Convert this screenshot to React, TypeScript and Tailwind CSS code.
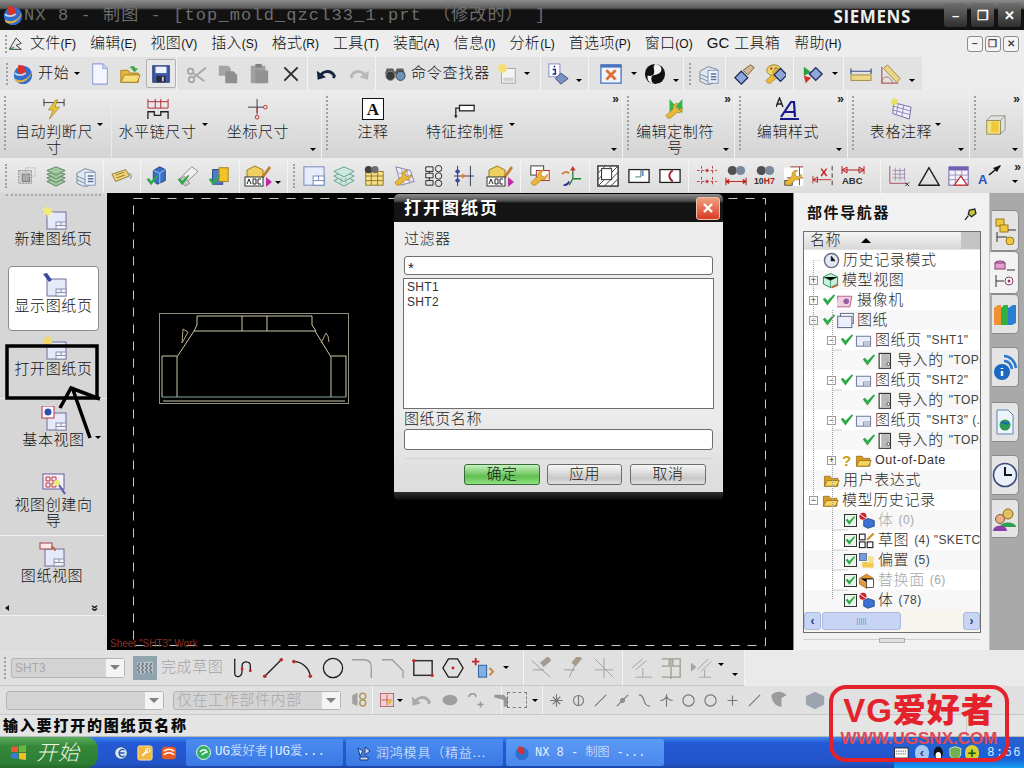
import type { ReactNode } from 'react';

const cjk = "font-['Liberation_Sans','Noto_Sans_CJK_SC',sans-serif]";

function Ic({ s = 22, w, children, className = '' }: { s?: number; w?: number; children: ReactNode; className?: string }) {
  return (
    <svg width={w ?? s} height={s} viewBox={`0 0 ${w ? (24 * w) / s : 24} 24`} fill="none" className={`shrink-0 ${className}`}>
      {children}
    </svg>
  );
}

function Dd({ className = '' }: { className?: string }) {
  return <span className={`inline-block shrink-0 w-0 h-0 border-x-[3px] border-t-[3px] border-x-transparent border-t-black ${className}`} />;
}

function Grip({ className = '' }: { className?: string }) {
  return <span className={`block shrink-0 w-0 border-l-2 border-dotted border-[#a0a0a0] ${className}`} />;
}

/* toolbar icons */
const Globe = () => (
  <Ic>
    <circle cx="12" cy="13" r="10" fill="#2f6fd0" />
    <path d="M3 17c6 4 14 2 19-8-2 9-11 15-18 11z" fill="#e8b23c" />
    <path d="M7 2l6 1 3 8-5 4-5-6z" fill="#d8322c" />
    <path d="M3 11c3 3 8 3 12 0" stroke="#bcd8f5" strokeWidth="2" />
  </Ic>
);
const DocNew = () => (
  <Ic>
    <path d="M4 1h11l5 5v17H4z" fill="#f4f6ff" stroke="#8ea0d8" strokeWidth="1.2" />
    <path d="M15 1v5h5" fill="#cfd8f4" stroke="#8ea0d8" />
  </Ic>
);
const FolderOpen = () => (
  <Ic>
    <path d="M2 8h8l2 3h9v10H2z" fill="#e4b73c" stroke="#a37d1c" />
    <path d="M2 21l4-8h17l-3 8z" fill="#f7dc78" stroke="#a37d1c" />
    <path d="M11 6c3-4 6-3 7 0h3l-4 4-4-4h2c-1-1-3-1-4 0z" fill="#3fa44a" />
  </Ic>
);
const Floppy = () => (
  <Ic>
    <rect x="3" y="3" width="18" height="18" fill="#3b5aa8" stroke="#26386c" />
    <rect x="6" y="4" width="12" height="7" fill="#f0f2fa" />
    <rect x="7" y="14" width="10" height="7" fill="#2a2a3c" />
    <rect x="13" y="15" width="2" height="5" fill="#c8c8d8" />
  </Ic>
);
const Scissors = () => (
  <Ic>
    <circle cx="6" cy="18" r="3" stroke="#a8a8a8" strokeWidth="2" />
    <circle cx="5" cy="9" r="3" stroke="#a8a8a8" strokeWidth="2" />
    <path d="M8 16L22 5M8 11l12 9" stroke="#a8a8a8" strokeWidth="2" />
  </Ic>
);
const Copy = () => (
  <Ic>
    <path d="M2 3h10l3 3v8H2z" fill="#a4a4a4" />
    <path d="M9 9h9l4 4v9H9z" fill="#8e8e8e" />
  </Ic>
);
const Paste = () => (
  <Ic>
    <rect x="3" y="3" width="16" height="19" rx="1" fill="#a0a0a0" />
    <rect x="8" y="1" width="7" height="4" fill="#808080" />
    <rect x="8" y="8" width="14" height="14" fill="#929292" />
  </Ic>
);
const Times = () => (
  <Ic s={20}>
    <path d="M4 4l16 16M20 4L4 20" stroke="#303030" strokeWidth="2.4" />
  </Ic>
);
const Undo = ({ c = '#15233f' }: { c?: string }) => (
  <Ic w={22} s={20}>
    <path d="M5 17c1-9 12-11 17-3l-1 3" stroke={c} strokeWidth="3.4" />
    <path d="M1 8l1 11 10-3z" fill={c} />
  </Ic>
);
const Redo = () => (
  <Ic w={22} s={20}>
    <path d="M21 17c-1-9-12-11-17-3l1 3" stroke="#b8b8b8" strokeWidth="3.4" />
    <path d="M25 8l-1 11-10-3z" fill="#b8b8b8" />
  </Ic>
);
const Binoc = () => (
  <Ic>
    <path d="M3 6h7l2 4 2-4h7l2 6H1z" fill="#5d5d5d" />
    <circle cx="7" cy="14" r="5" fill="#3a3a3a" stroke="#8a8a8a" />
    <circle cx="18" cy="14" r="5" fill="#6f92b8" stroke="#3a3a3a" />
  </Ic>
);
const DocGlow = () => (
  <Ic>
    <path d="M6 6h15v16H6z" fill="#f4f4f4" stroke="#a0a0a0" />
    <rect x="8" y="16" width="11" height="4" fill="#cfcfcf" />
    <circle cx="7" cy="6" r="5" fill="#f3de7c" />
  </Ic>
);
const Info = () => (
  <Ic>
    <rect x="1" y="1" width="12" height="14" fill="#fff" stroke="#7a8ac0" />
    <path d="M7 3v2M5 7h3v5M5 12h4" stroke="#1a2a8a" strokeWidth="1.6" />
    <path d="M14 11l8 6-8 6-6-6z" fill="#7b93c8" stroke="#3d4a78" />
  </Ic>
);
const Fit = () => (
  <Ic>
    <rect x="1" y="2" width="22" height="20" fill="#eef4ff" stroke="#4672c0" strokeWidth="1.4" />
    <rect x="1" y="2" width="22" height="3" fill="#4672c0" />
    <path d="M7 8l10 10M17 8L7 18" stroke="#e07030" strokeWidth="3" />
  </Ic>
);
const Spin = () => (
  <Ic>
    <circle cx="12" cy="12" r="11" fill="#101010" />
    <path d="M12 1c7 0 9 7 5 10s-9 1-9 6 3 6 4 6c-7 0-9-6-8-9 2 0 6 1 7-3s-2-6 1-10z" fill="#f4f4f4" />
  </Ic>
);
const Layers = ({ a = '#8aa0c0', b = '#c8d2e8' }: { a?: string; b?: string }) => (
  <Ic>
    {[18, 14, 10, 6].map((y) => (
      <path key={y} d={`M12 ${y - 4}l10 4-10 5-10-5z`} fill={b} stroke={a} />
    ))}
  </Ic>
);
const ListLayers = () => (
  <Ic>
    {[17, 13, 9].map((y) => (
      <path key={y} d={`M11 ${y - 5}l10 3v5l-10 4-9-4v-3z`} fill="#dfe6f4" stroke="#6f8a8f" />
    ))}
    <rect x="11" y="8" width="11" height="14" fill="#eef2fa" stroke="#7d92b4" />
    <path d="M14 12h6M14 15h6M14 18h6" stroke="#5e749c" strokeWidth="1.4" />
  </Ic>
);
const Wrench = ({ c = '#e8b83a' }: { c?: string }) => (
  <path d="M4 22l-2-3 8-7c-1-4 2-7 6-6l-3 3 1 3 3 1 3-3c1 4-3 7-6 6l-7 6z" fill={c} stroke="#9a6f14" strokeWidth=".6" />
);
const Diamond = ({ x = 12, y = 12 }: { x?: number; y?: number }) => (
  <path d={`M${x} ${y - 7}l7 7-7 7-7-7z`} fill="#8ea6d8" stroke="#1a2a58" strokeWidth="1.4" />
);
const Hand = () => (
  <Ic>
    <Diamond x={8} y={16} />
    <path d="M10 8l8-6 4 3-7 8z" fill="#d8b894" stroke="#7a5a3a" />
  </Ic>
);
const Palette = () => (
  <Ic>
    <ellipse cx="11" cy="8" rx="8" ry="6" fill="#f0d468" stroke="#9a7a24" />
    <circle cx="8" cy="6" r="1.4" fill="#d04030" />
    <circle cx="13" cy="6" r="1.4" fill="#3080d0" />
    <Wrench />
    <Diamond x={18} y={13} />
  </Ic>
);
const Arrows = () => (
  <Ic>
    <path d="M2 4l8 6-8 4z" fill="#28a040" />
    <path d="M2 14l8 2-6 6z" fill="#d83028" />
    <Diamond x={15} y={12} />
  </Ic>
);
const Ruler = () => (
  <Ic>
    <path d="M1 9h22M1 6v6M23 6v6" stroke="#3a4a8a" strokeWidth="1.3" />
    <rect x="1" y="13" width="22" height="6" fill="#ecd688" stroke="#a08a40" />
  </Ic>
);
const SetSquare = () => (
  <Ic>
    <path d="M2 4v18h18" stroke="#b06060" strokeWidth="1.4" />
    <path d="M2 22C2 14 10 12 14 22" stroke="#b06060" />
    <path d="M8 2l14 15-4 4L4 6z" fill="#ecd688" stroke="#a08a40" />
  </Ic>
);
const Stack = () => (
  <Ic>
    <rect x="4" y="6" width="14" height="14" fill="#cfcfcf" stroke="#8c8c8c" strokeDasharray="2 1" />
    <rect x="8" y="10" width="8" height="8" fill="#a8a8a8" stroke="#7c7c7c" />
    <rect x="12" y="3" width="10" height="9" stroke="#b8b8b8" strokeDasharray="2 1" />
  </Ic>
);
const Tag = () => (
  <Ic>
    <path d="M1 10l15-5 4 7-15 6z" fill="#f0d070" stroke="#8c7a3a" />
    <path d="M5 11l9-3M6 14l9-3" stroke="#8c7a3a" />
    <path d="M19 9c3 0 4 3 2 6" stroke="#707070" />
  </Ic>
);
const Check = ({ x = 0, y = 0, s = 1 }: { x?: number; y?: number; s?: number }) => (
  <path transform={`translate(${x} ${y}) scale(${s})`} d="M1 6l3-2 3 4 8-8 2 1-10 13z" fill="#2fa84a" />
);
const BlueBlock = () => (
  <Ic>
    <path d="M8 6l7-4 6 3v12l-9 4-4-4z" fill="#3870c8" stroke="#1a3a80" />
    <path d="M8 6l7 3 6-4M15 9v12" stroke="#a8c8f0" />
    <Check x={0} y={11} s={0.8} />
  </Ic>
);
const Brush = () => (
  <Ic>
    <path d="M4 14l12-12 7 5-13 12z" fill="#f0f0f0" stroke="#888" />
    <path d="M3 16l5-4 6 8-5 3z" fill="#c8c8c8" stroke="#909090" />
    <Check x={0} y={11} s={0.8} />
  </Ic>
);
const GoldBlock = () => (
  <Ic>
    <rect x="5" y="5" width="11" height="16" fill="#4f7cc8" stroke="#24427c" />
    <rect x="12" y="3" width="10" height="15" fill="#f2c428" stroke="#a07c10" />
    <Check x={0} y={11} s={0.8} />
  </Ic>
);
const Abc = () => (
  <Ic w={32} s={24}>
    <path d="M3 6l8-4 8 4v8H3z" fill="#f0d060" stroke="#9a7a20" />
    <path d="M17 13L25 2l2 2-8 11z" fill="#c08030" />
    <rect x="1" y="13" width="18" height="9" fill="#fff" stroke="#333" />
    <path d="M3 20l2-5 2 5M9 15v5h3v-5zM17 15h-3v5h3" stroke="#222" />
    <path d="M22 13l6 5-6 5z" fill="#c02aa0" />
  </Ic>
);
const SheetGrid = () => (
  <Ic>
    <rect x="1" y="2" width="22" height="20" fill="#e8ecfa" stroke="#6a82b8" />
    <rect x="11" y="12" width="12" height="10" fill="#fff" stroke="#6a82b8" />
    <path d="M11 17h12M17 12v5" stroke="#6a82b8" />
  </Ic>
);
const LayerTeal = () => (
  <Ic>
    {[17, 12, 7].map((y) => (
      <path key={y} d={`M12 ${y - 5}l11 5-11 6-11-6z`} fill="#cfe8dc" stroke="#5a9a8a" />
    ))}
    <path d="M9 14v6M14 14v6" stroke="#7aa8c8" />
  </Ic>
);
const TableBinoc = () => (
  <Ic>
    <rect x="3" y="7" width="19" height="15" fill="#f6de84" stroke="#8a7430" />
    <path d="M3 12h19M3 17h19M9 7v15M16 7v15" stroke="#8a7430" />
    <circle cx="6" cy="5" r="4" fill="#404040" />
    <circle cx="13" cy="5" r="4" fill="#6f6f6f" />
  </Ic>
);
const GridWrench = () => (
  <Ic>
    <path d="M3 2l16 4 4 12-14 4z" fill="#f0eff8" stroke="#7d79a8" />
    <path d="M4 8l16 4M6 14l16 4M9 3l3 18M15 5l3 16" stroke="#a8a4c8" />
    <Wrench />
  </Ic>
);
const Num123 = () => (
  <Ic>
    <circle cx="17" cy="4" r="3.5" stroke="#202020" />
    <circle cx="17" cy="12" r="3.5" stroke="#202020" />
    <circle cx="17" cy="20" r="3.5" stroke="#202020" />
    <path d="M3 2h8v5H3zM3 9h8v5H3zM3 17h8v5H3z" stroke="#202020" />
    <path d="M7 7v2M7 14v3" stroke="#202020" />
  </Ic>
);
const Distribute = () => (
  <Ic>
    <path d="M5 1v22M19 1v22M1 12h22" stroke="#303050" />
    <path d="M5 4l3 3-3 3-3-3zM5 14l3 3-3 3-3-3z" fill="#3a4aa0" />
    <path d="M10 9l4 3-4 3z" fill="#e08030" />
  </Ic>
);
const WindowsWrench = () => (
  <Ic>
    <rect x="2" y="1" width="14" height="10" fill="#fff" stroke="#333" />
    <rect x="8" y="6" width="14" height="11" fill="#fff" stroke="#b02020" />
    <Wrench />
  </Ic>
);
const Axis = () => (
  <Ic>
    <path d="M14 4v11h9M10 22l4-7" stroke="#208030" strokeWidth="1.4" />
    <path d="M14 1l-3 5h6z" fill="#d03030" />
    <path d="M2 10c3-3 6-3 8-1" stroke="#d08030" strokeWidth="2" />
    <path d="M4 22c3 0 5-2 6-4" stroke="#303090" strokeWidth="2" />
  </Ic>
);
const Hatch = () => (
  <Ic>
    <rect x="1" y="1" width="22" height="22" fill="#fff" stroke="#202020" strokeWidth="1.4" />
    <path d="M1 23L23 1M1 16L16 1M8 23L23 8M1 9l8-8M15 23l8-8" stroke="#303030" />
    <rect x="5" y="4" width="11" height="12" fill="#fff" stroke="#202020" />
  </Ic>
);
const Section = () => (
  <Ic>
    <rect x="1" y="5" width="22" height="14" fill="#fff" stroke="#202020" strokeWidth="1.4" />
    <path d="M14 5v8h-6" stroke="#308060" />
    <rect x="15" y="5" width="2" height="7" fill="#7080c8" />
  </Ic>
);
const Curve = () => (
  <Ic>
    <rect x="1" y="5" width="22" height="14" fill="#fff" stroke="#202020" strokeWidth="1.4" />
    <path d="M15 6c-5 3-5 8 0 12" stroke="#a02030" strokeWidth="2" />
  </Ic>
);
const Dots = () => (
  <Ic>
    <path d="M6 1v10M18 1v10M6 13v10M18 13v10M1 6h22M1 18h22" stroke="#c03838" strokeDasharray="3 2" />
    <circle cx="12" cy="6" r="1.4" stroke="#c03838" />
    <circle cx="12" cy="18" r="1.4" stroke="#c03838" />
  </Ic>
);
const BinocDim = ({ t }: { t: string }) => (
  <Ic>
    <circle cx="8" cy="6" r="5" fill="#505050" />
    <circle cx="17" cy="6" r="5" fill="#7a8a9a" />
    {t === 'a' ? (
      <path d="M1 18h22M1 14v8M23 14v8M1 18l3-2v4zM23 18l-3-2v4z" stroke="#c02828" strokeWidth="1.2" />
    ) : (
      <text x="0" y="21" fontSize="9.5" fontWeight="700" fill="#303030" fontFamily="Liberation Sans">
        10<tspan fill="#b02020">H7</tspan>
      </text>
    )}
  </Ic>
);
const TolWrench = () => (
  <Ic>
    <rect x="1" y="3" width="21" height="20" fill="#fff" />
    <path d="M8 2h14M18 2v20M4 14h18" stroke="#a03030" />
    <rect x="2" y="17" width="8" height="5" stroke="#202020" />
    <Wrench />
  </Ic>
);
const DimX = () => (
  <Ic>
    <path d="M22 1v22" stroke="#303030" strokeDasharray="5 3" />
    <path d="M1 16h20M1 12v8M1 16l5-3v6z" stroke="#c02828" />
    <path d="M10 4l6 8M16 4l-6 8" stroke="#c02828" strokeWidth="1.6" />
  </Ic>
);
const DimAbc = () => (
  <svg width="24" height="24" viewBox="0 0 24 24" className="shrink-0">
    <path d="M1 6h22M1 2v8M23 2v8M1 6l5-3v6zM23 6l-5-3v6z" stroke="#b82020" fill="none" />
    <text x="1" y="20" fontSize="9.5" fontWeight="700" fill="#303030" fontFamily="Liberation Sans">ABC</text>
  </svg>
);
const GridAxis = () => (
  <Ic>
    <path d="M2 1v19h18" stroke="#b04060" />
    <path d="M5 6h14M5 10h14M5 14h14M8 3v14M13 3v14M18 3v14" stroke="#a090b8" />
    <path d="M19 19l4 4M23 19l-4 4" stroke="#202020" />
  </Ic>
);
const Tri = () => (
  <Ic>
    <path d="M12 3L23 22H1z" stroke="#202020" strokeWidth="1.6" />
  </Ic>
);
const TableTri = () => (
  <Ic>
    <rect x="1" y="2" width="21" height="20" fill="#f2f2f8" stroke="#6a58a8" />
    <rect x="1" y="2" width="21" height="4" fill="#7060b0" />
    <path d="M1 11h21M1 16h21M8 6v16M15 6v16" stroke="#9a90c0" />
    <path d="M14 12l7 10H7z" fill="#fff" stroke="#c02828" strokeWidth="1.4" />
  </Ic>
);
const ALeader = () => (
  <svg width="24" height="24" viewBox="0 0 24 24" className="shrink-0">
    <path d="M11 11L22 2" stroke="#101010" strokeWidth="1.6" />
    <path d="M23 1l-8 3 4 4z" fill="#101010" />
    <text x="0" y="20" fontSize="13" fontWeight="700" fill="#2a50c0" fontFamily="Liberation Sans">A</text>
  </svg>
);
const Cube = () => (
  <Ic>
    <rect x="3" y="7" width="15" height="15" fill="#f4e27c" stroke="#8a8a60" />
    <path d="M3 7l5-5h15v15l-5 5M18 7l5-5" stroke="#909080" />
    <rect x="8" y="8" width="8" height="12" fill="#f0c83c" />
  </Ic>
);

/* big toolbar icons */
const AutoDim = () => (
  <Ic>
    <path d="M1 5h22M1 1v8M23 1v8" stroke="#303030" />
    <path d="M14 2L6 13h5l-4 10 11-13h-5l3-8z" fill="#ecc438" stroke="#8a6a10" strokeWidth=".6" />
  </Ic>
);
const ChainDim = () => (
  <Ic>
    <path d="M1 4h22M1 1v10M9 1v10M15 1v10M23 1v10M1 11h22" stroke="#b02028" />
    <path d="M1 23V15h7v4h7v-4h8v8" stroke="#202020" strokeWidth="1.4" />
  </Ic>
);
const Ordinate = () => (
  <Ic>
    <path d="M1 10h17M11 1v17" stroke="#303050" />
    <path d="M11 10v6" stroke="#c02020" />
    <circle cx="20" cy="10" r="2" stroke="#c02020" />
    <circle cx="11" cy="21" r="2" stroke="#c02020" />
  </Ic>
);
const Anno = () => (
  <svg width="22" height="22" viewBox="0 0 22 22" className="shrink-0">
    <rect x=".5" y=".5" width="21" height="21" fill="#fff" stroke="#111" />
    <text x="11" y="17" textAnchor="middle" fontSize="17" fontWeight="700" fill="#111" fontFamily="Liberation Serif">A</text>
  </svg>
);
const Fcf = () => (
  <Ic>
    <rect x="6" y="8" width="16" height="6" fill="#fff" stroke="#202020" strokeWidth="1.4" />
    <path d="M6 11H2v9" stroke="#202020" strokeWidth="1.4" />
    <path d="M0 19h4l-2 3z" fill="#202020" />
  </Ic>
);
const CustomSym = () => (
  <Ic>
    <path d="M6 1l7 8 7-8v16l-7-8-7 8z" fill="#30b850" />
    <Wrench />
  </Ic>
);
const StyleA = () => (
  <svg width="24" height="24" viewBox="0 0 24 24" className="shrink-0">
    <path d="M0 10L3.5 1 7 10M1.5 7h4" stroke="#202020" strokeWidth="1.4" fill="none" />
    <path d="M5 20L15 5h3l1 15M9 15h9" stroke="#18188c" strokeWidth="2.2" fill="none" />
    <rect x="4" y="21" width="19" height="2" fill="#18188c" />
  </svg>
);
const TableNote = () => (
  <Ic>
    <path d="M4 5l19 5-2 13L3 17z" fill="#f0f0f8" stroke="#7060a8" />
    <path d="M4 9l18 5M3 13l18 5M9 6l-2 12M15 8l-2 12" stroke="#8a80b8" />
    <circle cx="5" cy="4" r="3.5" fill="#e8e060" />
  </Ic>
);

/* left panel icons */
const SheetBase = ({ children }: { children?: ReactNode }) => (
  <svg width="26" height="26" viewBox="0 0 26 26" className="shrink-0">
    <rect x="6" y="7" width="19" height="17" fill="#e6e9fa" stroke="#6a6f9a" />
    <rect x="15" y="17" width="10" height="7" fill="#f4f4f8" stroke="#8a8fb0" />
    <path d="M15 20.5h10M20 17v3.5" stroke="#8a8fb0" />
    {children}
  </svg>
);
const Sun = () => <path d="M6 0l1.5 4L12 2 9.5 6 13 8 8.5 8.5 7 13 5.5 9 1 10l3-3-3-4 4 1z" fill="#f4ec70" />;

function Tb({ label, icon, w, dd, className = '' }: { label: ReactNode; icon: ReactNode; w: string; dd?: boolean; className?: string }) {
  return (
    <div className={`relative flex flex-col items-center pt-[7px] ${w} ${className}`}>
      <div className="h-[24px] flex items-center">{icon}</div>
      <div className="mt-[3px] text-[15px] leading-[16px] tracking-[0.6px] text-center text-[#1a1a1a] whitespace-nowrap">{label}</div>
      {dd && <Dd className="absolute top-[33px] -right-[5px]" />}
    </div>
  );
}

function Band({ w, dd, more, children }: { w: string; dd?: boolean; more?: boolean; children: ReactNode }) {
  return (
    <div className={`relative flex h-full shrink-0 border-r border-[#f2f2f2] ${w}`}>
      <Grip className="ml-[4px] mt-[6px] h-[54px]" />
      {children}
      {more && <span className="absolute right-[3px] top-[0px] text-[12px] font-bold text-[#222]">»</span>}
      {dd && <Dd className="absolute right-[5px] bottom-[7px]" />}
    </div>
  );
}

function SideBtn({ icon, children, className = '' }: { icon: ReactNode; children: ReactNode; className?: string }) {
  return (
    <div className={`flex flex-col items-center shrink-0 ${className}`}>
      {icon}
      <div className="text-[15px] leading-[16px] tracking-[0.6px] text-center text-[#111]">{children}</div>
    </div>
  );
}

function Tree({ pl, exp, check, box, icon, text, gray, odd, latin }: { pl: string; exp?: '+' | '-' | ''; check?: boolean; box?: boolean; icon: ReactNode; text: string; gray?: boolean; odd?: boolean; latin?: string }) {
  return (
    <div className={`flex items-center h-5 shrink-0 overflow-hidden whitespace-nowrap ${pl} ${odd ? 'bg-[#f7f7f7]' : 'bg-white'}`}>
      {exp !== undefined && (
        <span className="flex items-center justify-center w-[9px] h-[9px] mr-[4px] border border-[#9a9a9a] text-[9px] leading-none text-[#333] shrink-0">
          {exp === '+' ? '+' : exp === '-' ? '−' : ''}
        </span>
      )}
      {check && (
        <svg width="14" height="14" viewBox="0 0 18 14" className="shrink-0 mr-[1px]">
          <Check />
        </svg>
      )}
      {box && (
        <span className="flex items-center justify-center w-[13px] h-[13px] mr-[1px] border border-[#333] bg-[#e8f8e8] shrink-0">
          <svg width="11" height="11" viewBox="0 0 18 14">
            <Check />
          </svg>
        </span>
      )}
      <span className="flex w-[17px] h-[17px] shrink-0 mr-[3px] items-center">{icon}</span>
      <span className={`text-[15px] tracking-[0.6px] leading-5 ${gray ? 'text-[#a8a8a8]' : 'text-[#2a2a2a]'}`}>{text}</span>
      {latin && <span className={`ml-[5px] text-[12px] tracking-[0.4px] ${gray ? 'text-[#a8a8a8]' : 'text-[#444]'}`}>{latin}</span>}
    </div>
  );
}

const T = ({ children }: { children: ReactNode }) => (
  <svg width="17" height="17" viewBox="0 0 24 24" className="shrink-0">
    {children}
  </svg>
);
const TSheet = () => (
  <T>
    <rect x="2" y="6" width="20" height="14" fill="#eceffa" stroke="#6a7a9a" strokeWidth="1.4" />
    <path d="M12 14h10M12 17h10M12 14v6" stroke="#6a7a9a" />
  </T>
);
const TView = () => (
  <T>
    <rect x="3" y="2" width="16" height="21" fill="#fff" stroke="#303030" strokeWidth="1.6" />
    <rect x="6" y="3" width="12" height="19" fill="#b8b8b8" />
    <circle cx="16" cy="17" r="2" stroke="#303030" fill="#fff" />
  </T>
);
const TFolder = () => (
  <T>
    <path d="M2 6h8l2 3h9v11H2z" fill="#d89c20" stroke="#8a6210" />
    <path d="M2 20l4-8h17l-4 8z" fill="#f6d460" stroke="#8a6210" />
  </T>
);
const TBody = () => (
  <T>
    <circle cx="7" cy="6" r="5" fill="#c82028" />
    <path d="M3 3l8 6" stroke="#fff" strokeWidth="1.4" />
    <path d="M8 12l6-3 9 3v8l-9 3-6-3z" fill="#3a70d0" stroke="#1a3a80" />
  </T>
);
const Tab = ({ children, sel, className = '' }: { children: ReactNode; sel?: boolean; className?: string }) => (
  <div className={`flex items-center justify-center rounded-r-[5px] border border-l-0 border-[#8c8c8c] ${sel ? 'w-[29px] h-[43px] bg-[#f2f2f2]' : 'w-[27px] ml-[2px] bg-[#e4e4e4]'} ${className}`}>
    {children}
  </div>
);

const Gray = ({ children }: { children: ReactNode }) => <span className="flex opacity-50 grayscale">{children}</span>;

export default function App() {
  return (
    <div className={`relative w-[1024px] h-[768px] overflow-hidden flex flex-col bg-[#e4e4e4] font-light ${cjk}`}>
      {/* title bar */}
      <div className="h-[30px] shrink-0 flex items-center bg-[linear-gradient(#8c8c8c_0,#5c5c5c_8px,#121212_10px,#121212_100%)] relative">
        <span className="ml-[2px] flex"><Globe /></span>
        <span className="font-['Liberation_Mono','Noto_Sans_CJK_SC',monospace] font-normal text-[17px] tracking-[1.1px] text-[#6e6e6e] whitespace-nowrap pt-[2px]">
          NX 8 - 制图 - [top_mold_qzcl33_1.prt （修改的） ]
        </span>
        <span className="ml-auto mr-[33px] pt-[3px] font-['Open_Sans',sans-serif] font-bold text-[17px] tracking-[0.6px] text-[#eee]">SIEMENS</span>
        <div className="flex gap-[4px] mr-[3px]">
          {['–', '❐', '✕'].map((c) => (
            <span key={c} className="flex items-center justify-center w-[23px] h-[24px] rounded-[3px] bg-[linear-gradient(#6e6e6e,#2f2f2f)] text-white text-[13px] font-bold leading-none">{c}</span>
          ))}
        </div>
      </div>

      {/* menu bar */}
      <div className="h-[27px] shrink-0 flex items-center bg-[#ededed] text-[15px] tracking-[0.3px] text-[#111]">
        <Grip className="ml-[5px] h-[18px]" />
        <span className="ml-[1px] mr-[6px] flex">
          <Ic s={16}>
            <path d="M2 20L12 3l8 8-8 3 8 6z" fill="#e8e8e8" stroke="#404040" strokeWidth="1.5" />
            <path d="M2 20l7-3" stroke="#2a9a40" strokeWidth="2" />
          </Ic>
        </span>
        <div className="flex gap-[14px] whitespace-nowrap">
          {[['文件', '(F)'], ['编辑', '(E)'], ['视图', '(V)'], ['插入', '(S)'], ['格式', '(R)'], ['工具', '(T)'], ['装配', '(A)'], ['信息', '(I)'], ['分析', '(L)'], ['首选项', '(P)'], ['窗口', '(O)'], ['GC 工具箱', ''], ['帮助', '(H)']].map(([a, b]) => (
            <span key={a} className="flex items-center">
              {a}
              <span className="text-[12px] tracking-normal">{b}</span>
            </span>
          ))}
        </div>
        <div className="ml-auto mr-[5px] flex gap-[2px]">
          {['–', '❐', '✕'].map((c) => (
            <span key={c} className="flex items-center justify-center w-[16px] h-[16px] rounded-[3px] border border-[#8c8c8c] bg-[#f4f4f4] text-[10px] font-bold leading-none text-[#444]">{c}</span>
          ))}
        </div>
      </div>

      {/* standard toolbar */}
      <div className="h-[33px] shrink-0 flex items-center bg-[#ececec]">
        <div className="h-full w-[177px] shrink-0 flex items-center border-r border-[#f4f4f4] bg-[#e2e2e2]">
          <Grip className="ml-[6px] h-[22px]" />
          <span className="ml-[4px] flex"><Globe /></span>
          <span className="ml-[4px] text-[15px] tracking-[0.8px] text-[#111] whitespace-nowrap">开始</span>
          <Dd className="ml-[4px]" />
          <span className="ml-[9px] flex"><DocNew /></span>
          <span className="ml-[8px] flex"><FolderOpen /></span>
          <span className="ml-[5px] flex items-center justify-center w-[30px] h-[29px] rounded-[2px] border border-[#b0b0b0] bg-[#e8e8e8]"><Floppy /></span>
        </div>
        <div className="h-full w-[131px] shrink-0 flex items-center gap-[9px] pl-[9px] border-r border-[#f4f4f4] bg-[#e2e2e2]">
          <Scissors />
          <Copy />
          <Paste />
          <span className="ml-[2px] flex"><Times /></span>
        </div>
        <div className="h-full w-[68px] shrink-0 flex items-center gap-[10px] pl-[8px] border-r border-[#f4f4f4] bg-[#e2e2e2]">
          <Undo />
          <Redo />
        </div>
        <div className="h-full w-[165px] shrink-0 flex items-center pl-[8px] border-r border-[#f4f4f4] bg-[#e2e2e2]">
          <Binoc />
          <span className="ml-[5px] text-[15px] tracking-[0.8px] whitespace-nowrap text-[#111]">命令查找器</span>
          <span className="ml-[6px] flex"><DocGlow /></span>
          <Dd className="ml-[6px]" />
        </div>
        <div className="h-full w-[48px] shrink-0 flex items-center pl-[7px] border-r border-[#f4f4f4] bg-[#e2e2e2]">
          <Info />
          <Dd className="ml-[6px] mt-[14px]" />
        </div>
        <div className="h-full w-[95px] shrink-0 flex items-center pl-[11px] border-r border-[#f4f4f4] bg-[#e2e2e2]">
          <Fit />
          <Dd className="ml-[9px]" />
          <span className="ml-[7px] flex"><Spin /></span>
          <Dd className="ml-[7px] mt-[14px]" />
        </div>
        <div className="h-full w-[42px] shrink-0 flex items-center border-r border-[#f4f4f4] bg-[#e2e2e2]">
          <Grip className="ml-[5px] h-[22px]" />
          <span className="ml-[7px] flex"><ListLayers /></span>
        </div>
        <div className="h-full w-[68px] shrink-0 flex items-center gap-[8px] pl-[8px] border-r border-[#f4f4f4] bg-[#e2e2e2]">
          <Hand />
          <Palette />
        </div>
        <div className="h-full w-[50px] shrink-0 flex items-center pl-[8px] border-r border-[#f4f4f4] bg-[#e2e2e2]">
          <Arrows />
          <Dd className="ml-[8px]" />
        </div>
        <div className="h-full w-[78px] shrink-0 flex items-center gap-[8px] pl-[6px] bg-[#e2e2e2]">
          <Ruler />
          <SetSquare />
          <Dd className="mt-[14px] -ml-[1px]" />
        </div>
        <div className="flex-1" />
      </div>

      {/* ribbon */}
      <div className="h-[68px] shrink-0 flex bg-[linear-gradient(#ececec,#d4d4d4)]">
        <Band w="w-[322px]" dd>
          <Tb w="w-[88px] ml-[4px]" icon={<AutoDim />} dd label={<>自动判断尺<br />寸</>} />
          <Tb w="w-[92px] ml-[13px] border-l border-[#eaeaea]" icon={<ChainDim />} dd label="水平链尺寸" />
          <Tb w="w-[80px] ml-[15px]" icon={<Ordinate />} label="坐标尺寸" />
        </Band>
        <Band w="w-[301px]" dd more>
          <Tb w="w-[66px] ml-[12px]" icon={<Anno />} label="注释" />
          <Tb w="w-[90px] ml-[14px]" icon={<Fcf />} dd label="特征控制框" />
        </Band>
        <Band w="w-[112px]" dd more>
          <Tb w="w-[84px] ml-[4px]" icon={<CustomSym />} label={<>编辑定制符<br />号</>} />
        </Band>
        <Band w="w-[113px]" dd more>
          <Tb w="w-[68px] ml-[13px]" icon={<StyleA />} label="编辑样式" />
        </Band>
        <Band w="w-[122px]" dd>
          <Tb w="w-[70px] ml-[12px]" icon={<TableNote />} dd label="表格注释" />
        </Band>
        <Band w="w-[54px]" dd more>
          <span className="ml-[8px] mt-[24px] flex h-[22px]"><Cube /></span>
        </Band>
      </div>

      {/* annotation toolbar */}
      <div className="h-[35px] shrink-0 flex bg-[linear-gradient(#ececec,#dcdcdc)]">
        <div className="w-[104px] shrink-0 flex items-center gap-[8px] border-r border-[#f4f4f4]">
          <Grip className="ml-[5px] h-[24px]" />
          <Stack />
          <Layers a="#608060" b="#a0c8a0" />
          <ListLayers />
        </div>
        <div className="w-[37px] shrink-0 flex items-center pl-[7px] border-r border-[#f4f4f4]"><Tag /></div>
        <div className="w-[99px] shrink-0 flex items-center gap-[9px] pl-[5px] border-r border-[#f4f4f4]">
          <BlueBlock />
          <Brush />
          <GoldBlock />
        </div>
        <div className="w-[48px] shrink-0 flex items-center pl-[4px] border-r border-[#f4f4f4]">
          <Abc />
          <Dd className="-ml-[1px] mt-[14px]" />
        </div>
        <div className="w-[233px] shrink-0 flex items-center gap-[8px] border-r border-[#f4f4f4]">
          <Grip className="ml-[5px] h-[24px]" />
          <SheetGrid />
          <LayerTeal />
          <TableBinoc />
          <GridWrench />
          <Num123 />
          <Distribute />
          <span className="ml-[3px] flex"><Abc /></span>
        </div>
        <div className="w-[69px] shrink-0 flex items-center gap-[9px] pl-[8px] border-r border-[#f4f4f4]">
          <WindowsWrench />
          <Axis />
        </div>
        <div className="w-[99px] shrink-0 flex items-center gap-[9px] pl-[7px] border-r border-[#f4f4f4]">
          <Hatch />
          <Section />
          <Curve />
        </div>
        <div className="w-[192px] shrink-0 flex items-center gap-[7px] pl-[7px] border-r border-[#f4f4f4]">
          <Dots />
          <BinocDim t="a" />
          <BinocDim t="b" />
          <TolWrench />
          <DimX />
          <DimAbc />
        </div>
        <div className="flex-1 relative flex items-center gap-[8px] pl-[7px]">
          <GridAxis />
          <Tri />
          <TableTri />
          <ALeader />
          <span className="absolute right-[3px] top-[0px] text-[12px] font-bold text-[#222]">»</span>
          <Dd className="absolute right-[6px] top-[22px]" />
        </div>
      </div>

      {/* main area */}
      <div className="relative h-[457px] shrink-0 flex">
        <div className="w-[107px] shrink-0 flex flex-col bg-[#d6d6d6] relative">
          <div className="h-[2px] mx-[6px] border-t-2 border-dotted border-[#a8a8a8] mt-[1px]" />
          <SideBtn className="h-[70px] pt-[9px]" icon={<SheetBase><Sun /></SheetBase>}>新建图纸页</SideBtn>
          <SideBtn className="h-[65px] mx-[8px] pt-[5px] bg-white rounded-[4px] border border-[#8c8c8c]" icon={<SheetBase><path d="M2 2l4-1 5 7-3 2z" fill="#3a4a98" /></SheetBase>}>显示图纸页</SideBtn>
          <SideBtn className="h-[67px] pt-[4px]" icon={<SheetBase><path d="M3 3l5-2 3 3v5H3z" fill="#f0d86c" /></SheetBase>}>打开图纸页</SideBtn>
          <SideBtn className="relative h-[66px] pt-[7px] border-t border-[#ececec]" icon={<SheetBase><rect x="1" y="0" width="12" height="12" fill="#fff" stroke="#c02838" /><circle cx="7" cy="6" r="3.5" fill="#2d50b0" /></SheetBase>}>
            基本视图
            <Dd className="absolute right-[6px] top-[37px]" />
          </SideBtn>
          <SideBtn className="h-[71px] pt-[7px]" icon={
            <svg width="26" height="26" viewBox="0 0 26 26" className="shrink-0">
              <rect x="2" y="3" width="21" height="15" fill="#f4f0fa" stroke="#6a5a9a" />
              <path d="M5 6h4v4H5zM11 6h4v4h-4zM5 12h4v4H5zM11 12h4v4h-4z" fill="none" stroke="#c03038" />
              <path d="M16 11l8 12" stroke="#5a60b0" strokeWidth="2.2" />
              <circle cx="16" cy="12" r="3" fill="#e8f070" />
            </svg>
          }>视图创建向<br />导</SideBtn>
          <SideBtn className="h-[65px] mr-[3px] border-t border-[#f0f0f0] pt-[6px]" icon={
            <SheetBase><rect x="1" y="1" width="12" height="6" fill="#fde8e8" stroke="#a04048" /><path d="M12 5c3 0 4 2 4 4" stroke="#c06020" fill="none" strokeWidth="1.6" /></SheetBase>
          }>图纸视图</SideBtn>
          <div className="h-[16px] mr-[3px] flex items-center justify-between px-[5px] border-b border-[#f0f0f0]">
            <span className="w-0 h-0 border-y-[3px] border-r-[4px] border-y-transparent border-r-[#111]" />
            <span className="text-[12px] font-bold leading-none rotate-90 text-[#111]">»</span>
          </div>
          <div className="flex-1 bg-[#dcdcdc]" />
        </div>

        <div className="relative w-[686px] shrink-0 bg-black">
          {/* sheet border */}
          <svg width="686" height="457" viewBox="0 0 686 457" fill="none" className="absolute left-0 top-0">
            <rect x="26.5" y="5.5" width="632" height="447" stroke="#c8c8c8" strokeDasharray="9 8" />
          </svg>
          <svg width="192" height="93" viewBox="0 0 192 93" fill="none" className="absolute left-[52px] top-[120px]">
            <rect x=".5" y=".5" width="189" height="90" stroke="#8f8f82" />
            <path d="M38 3h115M38 3v9l-3 6h122l-4-6V3M83 3v15M108 3v15" stroke="#cfc8a8" />
            <path d="M35 18L18 44v40M156 18l16 26v40" stroke="#cfc8a8" />
            <path d="M3 43h15M3 43v41M172 43h15v41" stroke="#cfc8a8" />
            <path d="M24 16l5 3-6 11zM162 30l5-10 2 3 1 6" stroke="#b0a880" />
            <path d="M3 84h184" stroke="#87a8a8" />
            <path d="M4 88h182" stroke="#cfc8a8" />
          </svg>
          <span className="absolute left-[3px] bottom-[0px] text-[10px] leading-[12px] text-[#8a3028] whitespace-nowrap">Sheet "SHT3" Work</span>
        </div>

        {/* part navigator */}
        <div className="w-[197px] shrink-0 flex flex-col bg-[#f1f1f1] border-l border-[#8a8a8a] border-r border-r-[#c4c4c4]">
          <div className="h-[38px] shrink-0 flex items-center justify-between pl-[13px] pr-[12px]">
            <span className="text-[15px] font-bold tracking-[1.6px] text-[#111] pt-[3px]">部件导航器</span>
            <svg width="13" height="13" viewBox="0 0 24 24" className="mt-[4px]"><path d="M10 4l10-2 2 8-8 6-6-5z" fill="#c8c840" stroke="#222" strokeWidth="2.4" /><path d="M8 14l-6 8" stroke="#222" strokeWidth="2.4" /></svg>
          </div>
          <div className="relative ml-[9px] w-[178px] h-[402px] flex flex-col border border-[#6f6f6f] bg-white">
            <div className="h-[18px] shrink-0 flex items-center bg-[linear-gradient(#f4f4f4,#d8d8d8)] border-b border-[#e4e4e4]">
              <span className="ml-[6px] text-[15px] tracking-[0.6px] text-[#222]">名称</span>
              <span className="ml-[20px] w-0 h-0 border-x-[5px] border-b-[5px] border-x-transparent border-b-black" />
              <span className="ml-auto h-full w-[19px] bg-[#c4c4c4]" />
            </div>
            <Tree pl="pl-[19px]" icon={<T><circle cx="12" cy="12" r="10" fill="#dfe8f4" stroke="#6a6a7a" strokeWidth="2" /><path d="M12 6v6h5" stroke="#222" strokeWidth="2" /></T>} text="历史记录模式" />
            <Tree pl="pl-[5px]" exp="+" odd icon={<T><path d="M12 2l10 5v10l-10 5-10-5V7z" fill="#c8f0d8" stroke="#2a8a5a" strokeWidth="1.4" /><path d="M2 7l10 5 10-5M12 12v10" stroke="#2a8a5a" /><path d="M14 22l9-4" stroke="#d06030" strokeWidth="2" /></T>} text="模型视图" />
            <Tree pl="pl-[5px]" exp="+" check icon={<T><rect x="2" y="6" width="20" height="15" fill="#f0d0e0" stroke="#a04070" transform="skewX(-10)" /><circle cx="13" cy="13" r="4" fill="#9a60a0" /></T>} text="摄像机" />
            <Tree pl="pl-[5px]" exp="-" check odd icon={<T><rect x="5" y="2" width="18" height="14" fill="#fff" stroke="#5a6a8a" strokeWidth="1.4" /><rect x="1" y="6" width="20" height="16" fill="#eceffa" stroke="#5a6a8a" strokeWidth="1.4" /></T>} text="图纸" />
            <Tree pl="pl-[23px]" exp="-" check icon={<TSheet />} text="图纸页" latin={'"SHT1"'} />
            <Tree pl="pl-[58px]" check odd icon={<TView />} text="导入的" latin={'"TOP@'} />
            <Tree pl="pl-[23px]" exp="-" check icon={<TSheet />} text="图纸页" latin={'"SHT2"'} />
            <Tree pl="pl-[58px]" check odd icon={<TView />} text="导入的" latin={'"TOP@'} />
            <Tree pl="pl-[23px]" exp="-" check icon={<TSheet />} text="图纸页" latin={'"SHT3" (.'} />
            <Tree pl="pl-[58px]" check odd icon={<TView />} text="导入的" latin={'"TOP@'} />
            <div className="flex items-center h-5 shrink-0 bg-white pl-[23px]">
              <span className="flex items-center justify-center w-[9px] h-[9px] mr-[6px] border border-[#9a9a9a] text-[9px] leading-none text-[#333]">+</span>
              <span className="w-[13px] text-[15px] font-bold leading-none text-[#c8a020]">?</span>
              <span className="flex w-[17px] mr-[3px]"><TFolder /></span>
              <span className="text-[12.5px] tracking-[0.5px] text-[#333]">Out-of-Date</span>
            </div>
            <Tree pl="pl-[19px]" odd icon={<TFolder />} text="用户表达式" />
            <Tree pl="pl-[5px]" exp="-" icon={<TFolder />} text="模型历史记录" />
            <Tree pl="pl-[40px]" box odd gray icon={<TBody />} text="体" latin="(0)" />
            <Tree pl="pl-[40px]" box icon={<T><rect x="2" y="3" width="8" height="8" fill="#fff" stroke="#222" strokeWidth="1.6" /><rect x="2" y="14" width="8" height="8" fill="#fff" stroke="#222" strokeWidth="1.6" /><rect x="13" y="14" width="8" height="8" fill="#fff" stroke="#222" strokeWidth="1.6" /><path d="M13 11L22 2" stroke="#c89020" strokeWidth="3" /></T>} text="草图" latin={'(4) "SKETCH'} />
            <Tree pl="pl-[40px]" box odd icon={<T><rect x="2" y="2" width="10" height="10" fill="#7a9ad8" stroke="#3a5a98" /><path d="M6 14h16v8H6z" fill="#f0c850" /><path d="M14 6h8v10h-8z" fill="#f4e090" /></T>} text="偏置" latin="(5)" />
            <Tree pl="pl-[40px]" box gray icon={<T><path d="M2 9l10-6 10 6v8l-10 6-10-6z" fill="#e89830" stroke="#a05a18" /><path d="M2 9l10 6 10-6" stroke="#fff" /><rect x="12" y="10" width="10" height="12" fill="#fff" stroke="#222" /></T>} text="替换面" latin="(6)" />
            <Tree pl="pl-[40px]" box odd icon={<TBody />} text="体" latin="(78)" />
            <div className="flex-1 flex items-center gap-[1px] bg-[#f8f4ee] pb-[1px]">
              <span className="flex items-center justify-center w-[17px] h-[18px] rounded-[3px] bg-[#c8d4f4] border border-[#a8b8e0] text-[#1a3a8a] text-[12px] font-bold leading-none">‹</span>
              <span className="flex items-center justify-center w-[79px] h-[18px] rounded-[3px] bg-[#c8d4f4] border border-[#a8b8e0] text-[8px] text-[#7a8ac0] leading-none">|||||</span>
              <span className="flex-1" />
              <span className="flex items-center justify-center w-[17px] h-[18px] rounded-[3px] bg-[#c8d4f4] border border-[#a8b8e0] text-[#1a3a8a] text-[12px] font-bold leading-none">›</span>
            </div>
            {/* tree connector lines */}
            <svg width="60" height="360" viewBox="0 0 60 360" fill="none" className="absolute left-[9px] top-[28px] pointer-events-none">
              <path d="M.5 0v240M.5 0h8M19.5 50v290M19.5 90h10M19.5 130h10M19.5 170h10M19.5 270h16M19.5 290h16M19.5 310h16M19.5 330h16" stroke="#a0a0a0" strokeDasharray="1 1" />
            </svg>
          </div>
          <div className="h-[2px] mt-[6px] mx-[9px] flex justify-center items-center border-t border-[#d0d0d0]">
            <span className="block w-[26px] h-[5px] bg-[#e0e0e0] border border-[#b0b0b0]" />
          </div>
        </div>

        {/* right tabs */}
        <div className="flex-1 flex flex-col bg-[#a9a9a9] pt-[17px]">
          <Tab className="h-[41px]">
            <svg width="22" height="28" viewBox="0 0 22 28"><rect x="2" y="2" width="8" height="7" fill="#f0c840" stroke="#9a7a18" /><rect x="6" y="8" width="8" height="7" fill="#f0c840" stroke="#9a7a18" /><circle cx="16" cy="24" r="4" fill="#f0c840" stroke="#9a7a18" /><path d="M3 15v10M3 20h10M14 13h8" stroke="#333" /></svg>
          </Tab>
          <Tab sel>
            <svg width="22" height="28" viewBox="0 0 22 28"><ellipse cx="7" cy="4" rx="5" ry="2" fill="#e0a0d0" stroke="#8a3a6a" /><rect x="2" y="4" width="10" height="6" fill="#e0a0d0" stroke="#8a3a6a" /><circle cx="16" cy="22" r="4" fill="#fff" stroke="#8a3a6a" /><circle cx="16" cy="22" r="1.5" fill="#8a3a6a" /><path d="M3 16v12M3 22h8M14 11h8" stroke="#333" /></svg>
          </Tab>
          <Tab className="h-[40px]">
            <svg width="24" height="28" viewBox="0 0 24 28"><path d="M1 8l4-3h3v20H1z" fill="#f09030" /><path d="M8 8l3-3h4v20H8z" fill="#30b040" /><path d="M15 8l5-3h3v18l-4 2h-4z" fill="#2a80d0" /></svg>
          </Tab>
          <Tab className="h-[40px] mt-[13px]">
            <svg width="26" height="28" viewBox="0 0 26 28"><path d="M12 3c6 0 11 5 12 12M12 8c4 0 7 3 8 8" stroke="#2a78d0" strokeWidth="2.6" fill="none" /><circle cx="10" cy="19" r="8" fill="#1a68c0" /><path d="M10 15v1M10 18v5" stroke="#fff" strokeWidth="2.4" /></svg>
          </Tab>
          <Tab className="h-[40px] mt-[15px]">
            <svg width="22" height="26" viewBox="0 0 22 26"><path d="M3 1h11l5 5v19H3z" fill="#eef4fc" stroke="#5a82b8" /><circle cx="11" cy="16" r="5.5" fill="#2a9a50" /><path d="M7 14c3-2 5 2 8 0" stroke="#1a68c0" strokeWidth="2" fill="none" /></svg>
          </Tab>
          <Tab className="h-[40px] mt-[13px]">
            <svg width="26" height="26" viewBox="0 0 26 26"><circle cx="13" cy="13" r="11.5" fill="#eaf0fa" stroke="#3a4a7a" strokeWidth="1.6" /><path d="M13 5v8h7" stroke="#181818" strokeWidth="2" fill="none" /></svg>
          </Tab>
          <Tab className="h-[39px] mt-[4px]">
            <svg width="26" height="26" viewBox="0 0 26 26"><circle cx="16" cy="8" r="5" fill="#e0c060" stroke="#8a6a20" /><path d="M8 21c0-6 16-6 16 0z" fill="#30a050" /><circle cx="8" cy="13" r="4.5" fill="#e8b08a" stroke="#8a5a30" /><path d="M1 25c0-7 14-7 14 0z" fill="#8a40a8" /></svg>
          </Tab>
        </div>

        {/* pointer drawn on the screen */}
        <svg width="107" height="120" viewBox="0 0 107 120" fill="none" className="absolute left-0 top-[148px] pointer-events-none">
          <rect x="7" y="5" width="90" height="52" stroke="#000" strokeWidth="3.5" />
          <path d="M90 97L72 46M60 67L71 47l29 11" stroke="#000" strokeWidth="3.5" />
        </svg>

        {/* open sheet dialog */}
        <div className="absolute left-[394px] top-[1px] w-[329px] h-[306px] flex flex-col">
          <div className="h-[28px] shrink-0 flex items-center rounded-t-[5px] bg-[linear-gradient(#909090_0,#4c4c4c_7px,#141414_9px,#141414_100%)] pl-[10px] pr-[3px]">
            <span className="text-[17px] font-bold tracking-[2px] text-white pt-[2px]">打开图纸页</span>
            <span className="ml-auto flex items-center justify-center w-[24px] h-[23px] rounded-[3px] bg-[linear-gradient(#f0a080,#d83a24)] border border-[#f0c0a8]">
              <svg width="12" height="12" viewBox="0 0 12 12"><path d="M2 2l8 8M10 2l-8 8" stroke="#fff" strokeWidth="2.4" /></svg>
            </span>
          </div>
          <div className="flex-1 flex flex-col bg-[linear-gradient(#ececec_70%,#dcdcdc)] px-[10px] text-[#1a1a1a]">
            <div className="h-[34px] shrink-0 flex items-center text-[15px] tracking-[0.6px]">过滤器</div>
            <div className="h-[19px] shrink-0 flex items-center rounded-[3px] border border-[#6e6e6e] bg-white px-[3px] text-[15px] leading-none pt-[4px]">*</div>
            <div className="mt-[3px] -mx-[1px] h-[131px] shrink-0 border border-[#6e6e6e] bg-white pl-[3px] pt-[1px] text-[12px] leading-[15px] tracking-[0.3px] text-[#333]">
              <div>SHT1</div>
              <div>SHT2</div>
            </div>
            <div className="h-[20px] shrink-0 flex items-center text-[15px] tracking-[0.6px]">图纸页名称</div>
            <div className="h-[21px] shrink-0 rounded-[3px] border border-[#6e6e6e] bg-white" />
            <div className="mt-[8px] h-[1px] shrink-0 bg-[#d4d4d4]" />
            <div className="mt-[5px] ml-[60px] flex gap-[7px] text-[15px] tracking-[0.6px]">
              <span className="flex items-center justify-center w-[76px] h-[21px] rounded-[3px] border border-[#3a6a3a] bg-[linear-gradient(#c8f0c0,#60c050_60%,#90e080)]">确定</span>
              <span className="flex items-center justify-center w-[75px] h-[21px] rounded-[3px] border border-[#6e6e6e] bg-[linear-gradient(#f8f8f8,#c8c8c8_70%,#e0e0e0)]">应用</span>
              <span className="flex items-center justify-center w-[76px] h-[21px] ml-[1px] rounded-[3px] border border-[#6e6e6e] bg-[linear-gradient(#f8f8f8,#c8c8c8_70%,#e0e0e0)]">取消</span>
            </div>
          </div>
          <div className="h-[8px] shrink-0 rounded-b-[4px] bg-[linear-gradient(#303030,#0a0a0a)]" />
        </div>
      </div>

      {/* sketch toolbar */}
      <div className="h-[36px] shrink-0 flex bg-[#eaeaea]">
        <div className="w-[524px] shrink-0 flex items-center bg-[#e0e0e0] border-r border-[#f4f4f4] border-b border-b-[#c8c8c8]">
          <Grip className="ml-[4px] h-[22px]" />
          <div className="ml-[5px] w-[114px] h-[20px] flex items-center justify-between rounded-[3px] border border-[#b4b4b4] bg-[#d4d4d4] pl-[3px] text-[12px] text-[#a8a8a8]">
            SHT3
            <span className="flex items-center justify-center w-[18px] h-full bg-[#f4f4f4]"><span className="w-0 h-0 border-x-[5px] border-t-[5px] border-x-transparent border-t-[#808080]" /></span>
          </div>
          <span className="ml-[8px] w-[24px] h-[24px] bg-[#8fa4ac] flex items-center justify-center">
            <svg width="20" height="20" viewBox="0 0 20 20"><path d="M2 4c6 2 10-2 16 0v11c-6-2-10 2-16 0z" fill="#b8c4c8" /><path d="M4 5v10M8 5v10M12 5v10M16 5v10M2 8h16M2 12h16" stroke="#6e6e7a" strokeDasharray="2 2" strokeWidth="1.6" /></svg>
          </span>
          <span className="ml-[4px] text-[15px] tracking-[0.6px] text-[#a4a4a4] whitespace-nowrap">完成草图</span>
          <div className="ml-[9px] flex items-center gap-[8px]">
            <Ic><path d="M3 2v16c0 5 8 5 8-3V9c0-5 9-5 9 1v5" stroke="#1a1a1a" strokeWidth="1.4" /><circle cx="11" cy="13" r="1.6" fill="#c02828" /><circle cx="20" cy="15" r="1.6" fill="#c02828" /></Ic>
            <Ic><path d="M3 21L21 3" stroke="#1a1a1a" strokeWidth="1.4" /><circle cx="3" cy="21" r="2" fill="#c02828" /><circle cx="21" cy="3" r="2" fill="#c02828" /></Ic>
            <Ic><path d="M2 5c10 0 17 8 18 16" stroke="#1a1a1a" strokeWidth="1.4" /><circle cx="2" cy="5" r="2" fill="#c02828" /><circle cx="20" cy="21" r="2" fill="#c02828" /></Ic>
            <Ic><circle cx="12" cy="12" r="10.5" stroke="#1a1a1a" strokeWidth="1.4" /></Ic>
            <Ic><path d="M0 3h13c6 0 8 4 8 8v12" stroke="#9c9c9c" strokeWidth="1.4" /></Ic>
            <Ic><path d="M0 3h11l12 12v8" stroke="#9c9c9c" strokeWidth="1.4" /></Ic>
            <Ic><rect x="2" y="4" width="20" height="16" stroke="#303030" strokeWidth="1.6" /><circle cx="2" cy="4" r="1.8" fill="#c02828" /><circle cx="22" cy="20" r="1.8" fill="#c02828" /></Ic>
            <Ic><path d="M7 2h10l6 10-6 10H7L1 12z" stroke="#1a1a1a" strokeWidth="1.4" /><circle cx="12" cy="12" r="1.6" fill="#c02828" /></Ic>
            <Ic><path d="M4 1v8M0 5h8" stroke="#c02828" strokeWidth="2" /><rect x="7" y="9" width="9" height="13" fill="#7fb0e0" stroke="#2a5a98" /><path d="M19 12l4 4-4 4" stroke="#d08030" strokeWidth="2" /></Ic>
            <Dd className="ml-[1px]" />
          </div>
        </div>
        <div className="w-[99px] shrink-0 flex items-center gap-[9px] pl-[7px] bg-[#e0e0e0] border-r border-[#f4f4f4] border-b border-b-[#c8c8c8]">
          <Ic><path d="M1 4l20 18M2 14h12" stroke="#9a9a9a" /><rect x="12" y="4" width="11" height="6" fill="#a09a90" transform="rotate(-40 14 8)" /></Ic>
          <Ic><path d="M18 1L8 22M2 14h12" stroke="#9a9a9a" /><rect x="13" y="4" width="11" height="6" fill="#a89a8a" transform="rotate(-50 14 8)" /></Ic>
          <Ic><path d="M2 2l20 20M12 1v22M2 14h20" stroke="#a0a0a0" /></Ic>
        </div>
        <div className="w-[122px] shrink-0 relative flex items-center gap-[8px] pl-[7px] bg-[#e0e0e0] border-r border-[#f4f4f4] border-b border-b-[#c8c8c8]">
          <Ic><path d="M2 12L14 2M6 14L18 4M6 22h18M14 12v10" stroke="#a0a0a0" /></Ic>
          <Ic><path d="M2 2h20v20H2M2 10h8V2M14 2v8h8M12 2v22" stroke="#a09a90" strokeWidth="1.4" /></Ic>
          <Ic><path d="M1 6l6 5-6 5z" fill="#a4a4a4" /><path d="M8 14L20 2M12 16L23 5M10 22h13M16 14v8" stroke="#a0a0a0" /></Ic>
          <Dd className="-ml-[2px] -mt-[6px]" />
          <Dd className="absolute right-[6px] bottom-[9px]" />
        </div>
        <div className="flex-1" />
      </div>

      {/* selection toolbar */}
      <div className="h-[29px] shrink-0 flex bg-[#e0e0e0] border-b border-[#c8c8c8]">
        <div className="w-[373px] shrink-0 flex items-center border-r border-[#f4f4f4]">
          <div className="ml-[6px] w-[158px] h-[19px] flex items-center justify-end rounded-[3px] border border-[#b4b4b4] bg-[#d4d4d4]">
            <span className="flex items-center justify-center w-[18px] h-full bg-[#f4f4f4]"><span className="w-0 h-0 border-x-[5px] border-t-[5px] border-x-transparent border-t-[#808080]" /></span>
          </div>
          <div className="ml-[9px] w-[168px] h-[19px] flex items-center justify-between rounded-[3px] border border-[#b4b4b4] bg-[#d4d4d4] pl-[3px] text-[15px] tracking-[0.6px] text-[#a8a8a8] whitespace-nowrap">
            仅在工作部件内部
            <span className="flex items-center justify-center w-[18px] h-full bg-[#f4f4f4]"><span className="w-0 h-0 border-x-[5px] border-t-[5px] border-x-transparent border-t-[#808080]" /></span>
          </div>
          <span className="ml-[9px] flex"><Ic s={18}><path d="M3 6l7-4v18l-7-3z" fill="#a0a0a0" /><circle cx="17" cy="7" r="4" stroke="#b09a60" strokeWidth="2" /><circle cx="17" cy="16" r="4" stroke="#b09a60" strokeWidth="2" /></Ic></span>
        </div>
        <div className="w-[129px] shrink-0 flex items-center gap-[8px] pl-[6px] border-r border-[#f4f4f4]">
          <span className="flex items-center gap-[2px]">
            <Ic s={16}><rect x="2" y="2" width="20" height="20" fill="#f0d0d0" stroke="#a04050" /><path d="M12 4v16M4 12h16" stroke="#c02828" /><path d="M12 12l8 0-4 8z" fill="#e0c030" /></Ic>
            <Dd />
          </span>
          <Gray><Undo c="#5a7a90" /></Gray>
          <span className="flex opacity-50"><Ic s={18}><ellipse cx="12" cy="12" rx="10" ry="7" fill="#606060" /></Ic></span>
          <Gray><Ic s={18}><path d="M2 8c2-6 10-6 10 0M14 18h8M18 14v8" stroke="#505050" strokeWidth="2" /></Ic></Gray>
          <Gray><Ic s={16}><path d="M2 4h14l6 6v12h-6V12L2 8z" fill="#505050" /></Ic></Gray>
        </div>
        <div className="w-[41px] shrink-0 flex items-center gap-[1px] pl-[5px] border-r border-[#f4f4f4]">
          <span className="block w-[20px] h-[16px] border border-dashed border-[#808080]" />
          <Dd className="ml-[4px]" />
        </div>
        <div className="flex-1 flex items-center gap-[7px] pl-[6px] opacity-60">
          {['M2 12h20M12 2v20M6 6l12 12M18 6L6 18', 'M4 12a8 8 0 1 0 16 0 8 8 0 1 0-16 0M12 4v16', 'M3 21L21 3', 'M3 21L21 3M12 12m-3 0a3 3 0 1 0 6 0a3 3 0 1 0-6 0', 'M3 3c12 0 4 18 18 18', 'M12 22V2M2 12c8 0 10-6 10-8 0 2 2 8 10 8', 'M3 12a9 9 0 1 0 18 0 9 9 0 1 0-18 0M12 12v.1', 'M3 12a9 9 0 1 0 18 0 9 9 0 1 0-18 0', 'M12 4v16M4 12h16', 'M3 21L21 3M12 12v.1'].map((d) => (
            <Ic key={d} s={15}><path d={d} stroke="#303030" strokeWidth="1.8" /></Ic>
          ))}
          <Ic s={20}><path d="M3 6c6-6 14-4 18 0l-6 4v10C8 20 3 14 3 6z" fill="#707070" /></Ic>
          <span className="ml-[8px] flex"><Ic s={22}><path d="M12 3l10 5v9l-10 5-10-5V8z" fill="#6f7f8f" /></Ic></span>
        </div>
      </div>

      {/* status line */}
      <div className="h-[22px] shrink-0 flex items-center bg-[#e4e4e4] border-b border-[#b8b8b8]">
        <span className="ml-[3px] text-[15px] font-black tracking-[1.8px] leading-none text-[#0a0a0a]">输入要打开的图纸页名称</span>
        <span className="ml-auto mr-[57px] block w-[1px] h-full bg-[#c8c8c8]" />
      </div>

      {/* taskbar */}
      <div className="flex-1 flex items-center bg-[linear-gradient(#3f86ec,#2459d6_20%,#2254c8_85%,#1b46a8)]">
        <div className="h-full w-[98px] shrink-0 flex items-center rounded-r-[12px] bg-[linear-gradient(#5cae5c,#35883a_30%,#2c7e32_85%,#256a2a)]">
          <span className="ml-[10px] flex">
            <svg width="18" height="18" viewBox="0 0 18 18"><path d="M1 3l7-1v6H1z" fill="#e85a30" /><path d="M9 2l7-1v7H9z" fill="#6ab83a" /><path d="M1 9h7v6l-7-1z" fill="#3a7ae0" /><path d="M9 9h7v7l-7-1z" fill="#f0c030" /></svg>
          </span>
          <span className="ml-[8px] text-[21px] italic tracking-[1px] text-[#eef5e8] leading-none">开始</span>
        </div>
        <div className="ml-[15px] flex items-center gap-[8px]">
          <svg width="16" height="16" viewBox="0 0 18 18"><circle cx="9" cy="9" r="7.5" fill="#d8e8f8" stroke="#2a5ab0" strokeWidth="2" /><path d="M6 9h7M13 6c-2-2-6-1-6 3s4 5 6 3" stroke="#2a5ab0" strokeWidth="1.6" fill="none" /></svg>
          <svg width="16" height="16" viewBox="0 0 18 18"><rect x="1" y="1" width="16" height="16" rx="2" fill="#f0b840" stroke="#f8e8b0" /><path d="M6 12l6-6" stroke="#fff" strokeWidth="2" /><circle cx="12" cy="6" r="2.5" stroke="#fff" fill="none" /></svg>
          <svg width="16" height="16" viewBox="0 0 18 18"><rect x="1" y="2" width="16" height="14" rx="4" fill="#e85a24" /><path d="M3 7c4-3 8-3 12 0M3 11c4-3 8-3 12 0" stroke="#fff" strokeWidth="1.6" fill="none" /></svg>
        </div>
        <div className="ml-[9px] h-[27px] w-[157px] shrink-0 flex items-center rounded-[2px] bg-[linear-gradient(#4a8cf0,#3a78e4)] pl-[10px] text-[12.5px] text-[#e8f0ff] whitespace-nowrap font-['Liberation_Mono','Noto_Sans_CJK_SC',monospace]">
          <svg width="15" height="15" viewBox="0 0 15 15" className="mr-[4px] shrink-0"><circle cx="7.5" cy="7.5" r="7" fill="#30b060" stroke="#e8f8e8" /><path d="M4 7c2-3 6-3 7 0-2 1-4 1-5 3" stroke="#fff" fill="none" strokeWidth="1.4" /></svg>
          UG爱好者|UG爱...
        </div>
        <div className="ml-[3px] h-[27px] w-[157px] shrink-0 flex items-center rounded-[2px] bg-[linear-gradient(#4a8cf0,#3a78e4)] pl-[10px] text-[13px] tracking-[0.8px] text-[#e8f0ff] whitespace-nowrap">
          <svg width="16" height="16" viewBox="0 0 16 16" className="mr-[4px] shrink-0"><path d="M2 3l5 3-3 5zM9 2l5 4-5 4zM4 12h8v3H4z" fill="#c8d8f0" stroke="#1a3a80" /></svg>
          润鸿模具（精益...
        </div>
        <div className="ml-[3px] h-[27px] w-[158px] shrink-0 flex items-center rounded-[2px] bg-[linear-gradient(#5a9af4,#4a88ec)] pl-[8px] text-[12px] text-[#e8f0ff] whitespace-nowrap font-['Liberation_Mono','Noto_Sans_CJK_SC',monospace]">
          <Ic s={16}><circle cx="12" cy="13" r="10" fill="#2f6fd0" /><path d="M7 2l6 1 3 8-5 4-5-6z" fill="#d8322c" /></Ic>
          <span className="ml-[5px]">NX 8 - 制图 -...</span>
        </div>
        <div className="ml-auto h-full w-[130px] flex items-center justify-end gap-[2px] pr-[2px] bg-[linear-gradient(#2860d0,#1a60d8_70%,#16a0f0)]">
          <svg width="16" height="12" viewBox="0 0 16 12"><rect x=".5" y=".5" width="15" height="11" fill="#fff" stroke="#222" /><path d="M2 4h12M2 7h12" stroke="#333" strokeDasharray="1 1" /></svg>
          <span className="ml-[4px] flex items-center justify-center w-[16px] h-[16px] rounded-full bg-[#a8c8f4] text-[#1a3a8a] text-[13px] font-bold leading-none">‹</span>
          <svg width="16" height="16" viewBox="0 0 16 16"><ellipse cx="8" cy="8" rx="5" ry="7" fill="#111" /><ellipse cx="8" cy="11" rx="3" ry="4" fill="#fff" /><path d="M3 14h10v1H3z" fill="#e03030" /></svg>
          <svg width="16" height="16" viewBox="0 0 16 16"><path d="M8 1l6 2v6c0 3-3 5-6 6-3-1-6-3-6-6V3z" fill="#70b050" stroke="#d0e8c0" /></svg>
          <span className="flex items-center justify-center w-[16px] h-[16px] rounded-full bg-[#d8d030] text-[#14601a] text-[15px] font-bold leading-none">+</span>
          <span className="ml-[6px] text-[12px] tracking-[1.5px] text-[#dce8ff] font-['Liberation_Mono',monospace]">8:56</span>
        </div>
      </div>

      {/* watermark */}
      <div className="absolute left-[829px] top-[685px] w-[180px] h-[77px] rounded-[17px] border-[4px] border-[#e5222c] flex flex-col items-center pointer-events-none">
        <span className="mt-[5px] text-[33px] leading-[34px] font-black tracking-[1px] text-[#e5222c] whitespace-nowrap">VG爱好者</span>
        <span className="mt-[3px] text-[17px] leading-[16px] font-bold text-[#e24a52] whitespace-nowrap">WWW.UGSNX.COM</span>
      </div>
    </div>
  );
}
